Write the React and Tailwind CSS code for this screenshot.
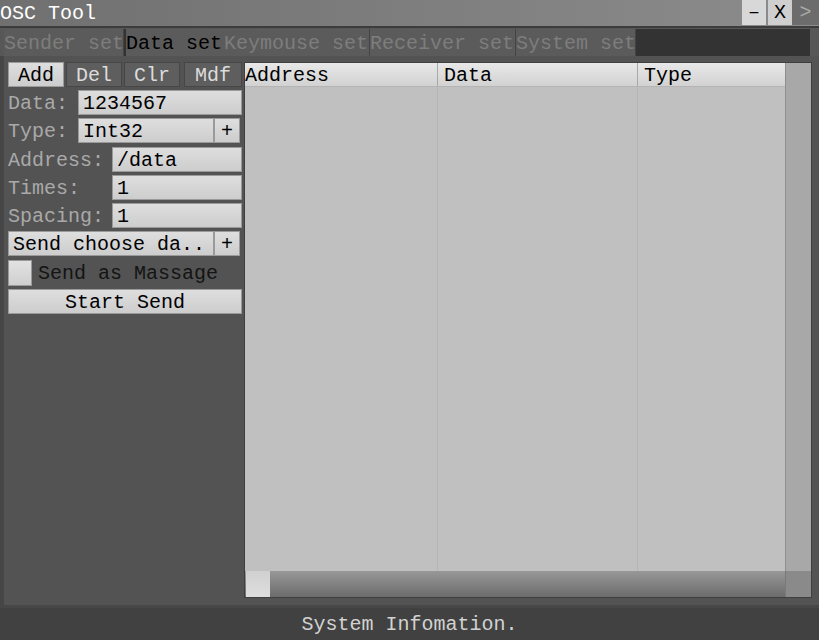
import React from 'react';

const mono = { fontFamily: '"Liberation Mono", "DejaVu Sans Mono", monospace' };

function LightBox({ className = '', children }) {
  return (
    <div className={`flex items-center whitespace-nowrap pt-[2px] bg-gradient-to-b from-[#dedede] to-[#cdcdcd] border border-[#9a9a9a] text-black ${className}`}>
      {children}
    </div>
  );
}

function FieldRow({ label, value, inputLeft }) {
  return (
    <div className="flex h-[25px] items-center">
      <div className="text-[#a9a9a9] leading-none whitespace-nowrap pt-[2px]" style={{ width: inputLeft }}>{label}</div>
      <LightBox className="flex-1 h-full pl-[4px]">{value}</LightBox>
    </div>
  );
}

export default function App() {
  const tabs = [
    { name: 'Sender set', w: 'w-[120px]' },
    { name: 'Data set', w: 'w-[100px]', active: true },
    { name: 'Keymouse set', w: 'w-[146px]' },
    { name: 'Receiver set', w: 'w-[146px]' },
    { name: 'System set', w: 'w-[120px]' },
  ];

  return (
    <div className="w-[819px] h-[640px] flex flex-col bg-[#535353] text-[20px] overflow-hidden" style={mono}>
      {/* title bar */}
      <div className="h-[28px] flex items-stretch bg-gradient-to-r from-[#707070] to-[#8c8c8c] border-b-2 border-[#3c3c3c]">
        <div className="flex-1 flex items-center text-white leading-none pt-[2px]">OSC Tool</div>
        <div className="flex items-stretch pb-[1px]">
          <div className="w-[24px] flex items-center justify-center bg-[#d8d8d8] text-black mr-[2px]">–</div>
          <div className="w-[24px] flex items-center justify-center bg-[#cfcfcf] text-black">X</div>
          <div className="w-[27px] flex items-center justify-center bg-[#6c6c6c] text-[#a8a8a8]">&gt;</div>
        </div>
      </div>

      {/* tabs */}
      <div className="h-[28px] flex bg-[#575757] pl-[4px] pr-[9px] pt-[1px]">
        <div className="flex-1 flex bg-[#333333]">
          {tabs.map((t) => (
            <div
              key={t.name}
              className={`${t.w} shrink-0 h-full flex items-center pt-[2px] leading-none whitespace-nowrap overflow-hidden bg-[#5b5b5b] ${t.active ? 'text-black border-l-2 border-[#333]' : 'text-[#7d7d7d] border-r border-[#444]'}`}
            >
              {t.name}
            </div>
          ))}
        </div>
      </div>

      {/* main */}
      <div className="flex-1 flex gap-[2px] border-l-4 border-[#464646] border-b-3 border-b-[#474747] pl-[4px] pr-[7px] pt-[6px] pb-[7px]">
        {/* left panel */}
        <div className="w-[234px] flex flex-col gap-[3px]">
          <div className="flex gap-[2px] h-[25px]">
            <LightBox className="w-[56px] justify-center">Add</LightBox>
            <div className="w-[56px] flex items-center justify-center pt-[2px] bg-[#5e5e5e] border border-[#464646] text-[#dcdcdc]">Del</div>
            <div className="w-[56px] flex items-center justify-center pt-[2px] bg-[#5e5e5e] border border-[#464646] text-[#dcdcdc]">Clr</div>
            <div className="flex-1 ml-[2px] flex items-center justify-center pt-[2px] bg-[#5e5e5e] border border-[#464646] text-[#dcdcdc]">Mdf</div>
          </div>
          <FieldRow label="Data:" value="1234567" inputLeft={70} />
          <div className="flex h-[25px] items-center mb-[1px]">
            <div className="w-[70px] text-[#a9a9a9] leading-none pt-[2px]">Type:</div>
            <LightBox className="flex-1 h-full pl-[4px]">Int32</LightBox>
            <LightBox className="w-[26px] h-full justify-center text-[#555] mr-[2px]">+</LightBox>
          </div>
          <FieldRow label="Address:" value="/data" inputLeft={104} />
          <FieldRow label="Times:" value="1" inputLeft={104} />
          <FieldRow label="Spacing:" value="1" inputLeft={104} />
          <div className="flex h-[25px]">
            <LightBox className="flex-1 pl-[4px]">Send choose da..</LightBox>
            <LightBox className="w-[26px] justify-center text-[#555] mr-[2px]">+</LightBox>
          </div>
          <div className="flex h-[26px] items-center gap-[6px] mt-[1px]">
            <div className="w-[24px] h-[26px] bg-gradient-to-b from-[#e2e2e2] to-[#cfcfcf] border border-[#9a9a9a]" />
            <div className="text-[#141414] leading-none whitespace-nowrap pt-[2px]">Send as Massage</div>
          </div>
          <LightBox className="h-[25px] justify-center">Start Send</LightBox>
        </div>

        {/* table */}
        <div className="flex-1 flex flex-col border border-[#3f3f3f] bg-[#c0c0c0]">
          <div className="flex-1 flex">
            <div className="flex-1 flex flex-col">
              <div className="h-[24px] flex bg-gradient-to-b from-[#e8e8e8] to-[#d2d2d2] border-b border-[#b4b4b4] text-black leading-none">
                <div className="w-[193px] flex items-center pt-[2px] border-r border-[#a8a8a8]">Address</div>
                <div className="w-[200px] flex items-center pt-[2px] pl-[6px] border-r border-[#a8a8a8]">Data</div>
                <div className="flex-1 flex items-center pt-[2px] pl-[6px]">Type</div>
              </div>
              <div className="flex-1 flex">
                <div className="w-[193px] border-r border-[#b6b6b6]" />
                <div className="w-[200px] border-r border-[#b6b6b6]" />
                <div className="flex-1" />
              </div>
            </div>
            <div className="w-[26px] bg-[#a8a8a8] border-l border-[#8e8e8e]" />
          </div>
          <div className="h-[26px] flex">
            <div className="flex-1 flex bg-gradient-to-b from-[#989898] to-[#6c6c6c]">
              <div className="w-[24px] ml-[1px] bg-gradient-to-b from-[#d0d0d0] to-[#dedede]" />
            </div>
            <div className="w-[26px] bg-[#8a8a8a] border-l border-[#7a7a7a]" />
          </div>
        </div>
      </div>

      {/* status bar */}
      <div className="h-[32px] flex items-center justify-center pt-[2px] bg-[#414141] text-[#d2d2d2] leading-none">
        System Infomation.
      </div>
    </div>
  );
}
